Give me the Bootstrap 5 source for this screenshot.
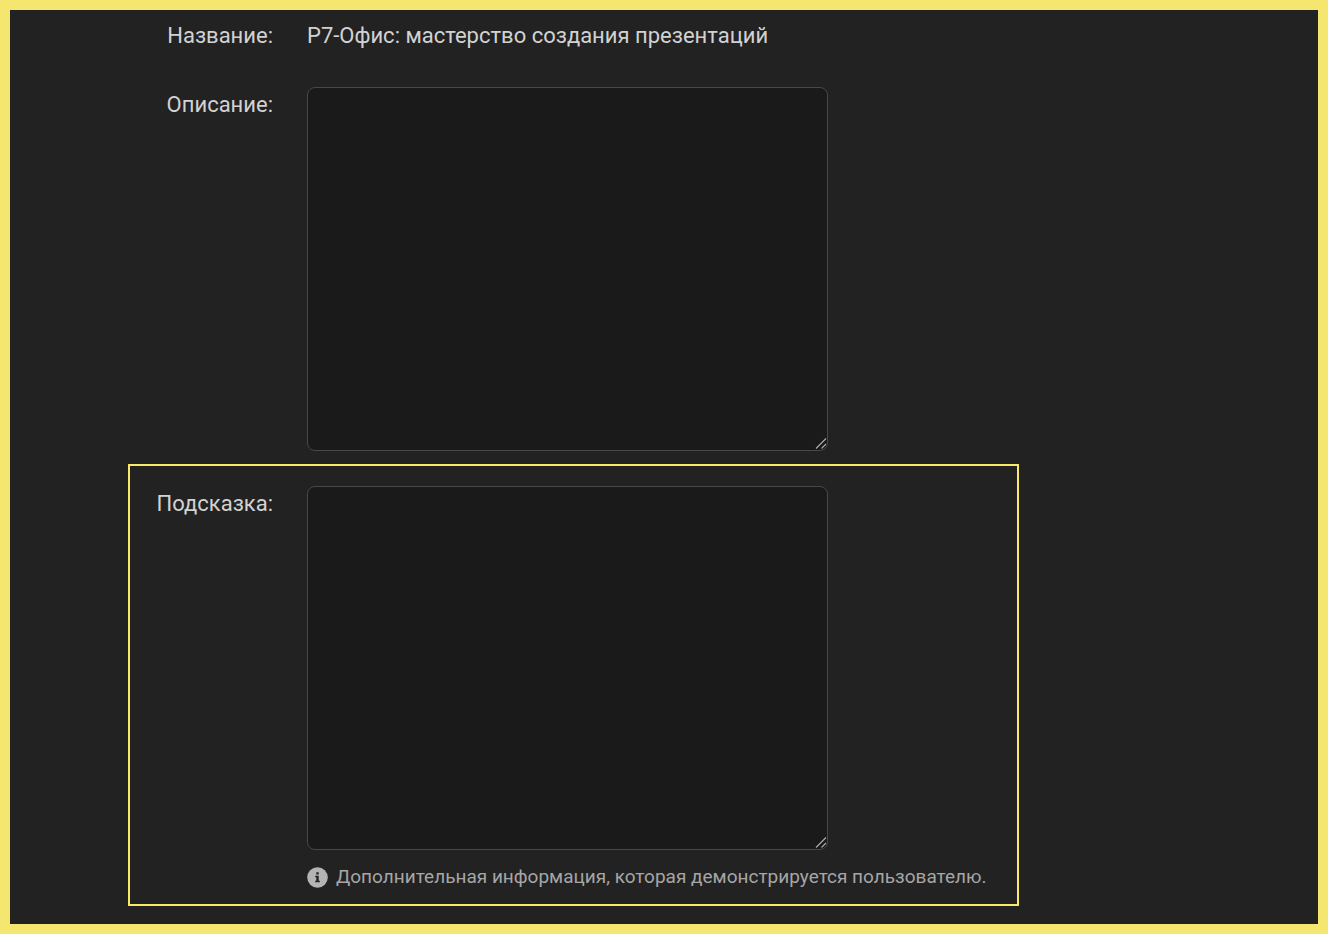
<!DOCTYPE html>
<html lang="ru">
<head>
<meta charset="utf-8">
<meta name="viewport" content="width=device-width, initial-scale=1">
<title>Р7-Офис: мастерство создания презентаций</title>
<link href="https://cdn.jsdelivr.net/npm/bootstrap@5.3.0/dist/css/bootstrap.min.css" rel="stylesheet">
<style>
  body { background: #222; color: #d2d2d2; font-family: Roboto, "Liberation Sans", sans-serif; font-size: 22px; line-height: 36px; border: 10px solid #f5e66f; }
  .course-form { max-width: 1009px; padding: 8px 0 18px 118px; }
  .form-line { display: grid; grid-template-columns: 143px minmax(0, 1fr); column-gap: 34px; border: 0 solid transparent; border-width: 0 2px; }
  .form-line + .form-line { margin-top: 33px; }
  .form-line + .form-line.highlighted { border: 2px solid #f8e967; margin-top: 13px; padding: 20px 0 13px; }
  .field-box { display: block; max-width: 521px; height: 364px; background: #1a1a1a; border: 1px solid #484848; border-radius: 8px; color: inherit; font-size: 22px; resize: both; color-scheme: dark; }
  .field-box:focus { background: #1a1a1a; color: inherit; border-color: #777; box-shadow: none; }
  .field-box::-webkit-resizer { background: url("data:image/svg+xml,%3Csvg xmlns='http://www.w3.org/2000/svg' width='15' height='15'%3E%3Cpath d='M4 13.500L14 3.500M9.500 13.500L14 9' stroke='%23aaa' stroke-width='1.200'/%3E%3C/svg%3E") right bottom no-repeat; }
  .hint-line { color: #a6a6a6; font-size: 19px; line-height: 28px; margin-top: 13px; gap: 8px; }
</style>
</head>
<body class="min-vh-100">
<form class="course-form">
  <div class="form-line">
    <div class="text-end">Название:</div>
    <div>Р7-Офис: мастерство создания презентаций</div>
  </div>
  <div class="form-line">
    <label class="text-end" for="description">Описание:</label>
    <div><textarea class="form-control field-box" id="description"></textarea></div>
  </div>
  <div class="form-line highlighted">
    <label class="text-end" for="tip">Подсказка:</label>
    <div>
      <textarea class="form-control field-box" id="tip" aria-describedby="tip-help"></textarea>
      <div class="hint-line d-flex align-items-center" id="tip-help">
        <svg class="flex-shrink-0" width="21" height="21" viewBox="0 0 21 21" aria-hidden="true"><circle cx="10.5" cy="10.5" r="10.3" fill="#b4b4b4"/><path d="M9.300 5.300h2.400v2.200H9.300zM8.200 8.800h3.500v4.900h1.100v1.500H8.200v-1.500h1.100v-3.400H8.200z" fill="#222"/></svg>
        <span>Дополнительная информация, которая демонстрируется пользователю.</span>
      </div>
    </div>
  </div>
</form>
<script src="https://cdn.jsdelivr.net/npm/bootstrap@5.3.0/dist/js/bootstrap.bundle.min.js"></script>
</body>
</html>
